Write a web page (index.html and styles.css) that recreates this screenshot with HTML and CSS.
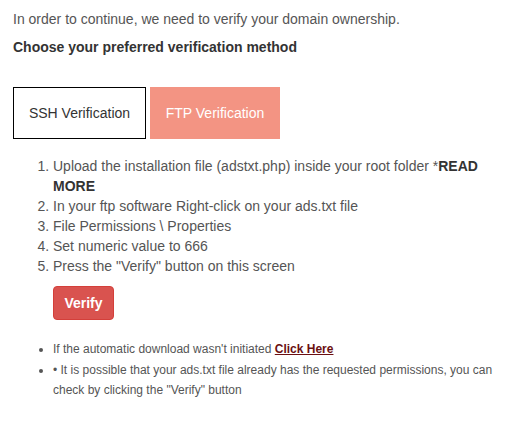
FILE: index.html
```html
<!DOCTYPE html>
<html lang="en">
<head>
    <meta charset="UTF-8">
    <meta name="viewport" content="width=device-width, initial-scale=1.0">
    <title>Verify Domain Ownership</title>

    <link rel="stylesheet" href="styles.css">
</head>
<body>
    <main class="wrapper">
        <p class="intro">In order to continue, we need to verify your domain ownership.</p>
        <h4 class="subtitle">Choose your preferred verification method</h4>

        <div class="tabs">
            <button class="tab">SSH Verification</button>
            <button class="tab tab-active">FTP Verification</button>
        </div>

        <ol class="steps">
            <li>Upload the installation file (adstxt.php) inside your root folder *<b>READ MORE</b></li>
            <li>In your ftp software Right-click on your ads.txt file</li>
            <li>File Permissions \ Properties</li>
            <li>Set numeric value to 666</li>
            <li>Press the "Verify" button on this screen</li>
        </ol>

        <div class="actions">
            <button class="btn-verify">Verify</button>
        </div>

        <ul class="notes">
            <li>If the automatic download wasn't initiated <a href="#">Click Here</a></li>
            <li>&bull; It is possible that your ads.txt file already has the requested permissions, you can check by clicking the "Verify" button</li>
        </ul>
    </main>
</body>
</html>
```

FILE: styles.css
```css
* {
    padding: 0;
    margin: 0;
    box-sizing: border-box;
}

body {
    background-color: #fff;
    color: #555;
    font-family: "Liberation Sans", Arial, sans-serif;
    font-size: 14px;
}

.wrapper {
    padding: 9px 13px 0 13px;
}

.intro {
    line-height: 20px;
}

.subtitle {
    margin-top: 10px;
    font-size: 14px;
    line-height: 17px;
    color: #333;
}

.tabs {
    display: flex;
    align-items: flex-start;
    gap: 4px;
    margin-top: 31px;
}

.tab {
    font-family: inherit;
    font-size: 14px;
    height: 52px;
    background-color: #fff;
    color: #333;
    border: 1px solid #000;
    cursor: pointer;
}

.tab:first-child {
    width: 133px;
}

.tab-active {
    width: 130px;
    background-color: #f39483;
    border-color: #f39483;
    color: #fff;
}

.steps {
    margin-top: 17px;
    padding-left: 40px;
    line-height: 20px;
}

.steps b {
    color: #333;
}

.actions {
    padding-left: 40px;
    margin-top: 10px;
}

.btn-verify {
    font-family: inherit;
    font-size: 14px;
    font-weight: bold;
    color: #fff;
    background-color: #d9534f;
    border: 1px solid #d43f3a;
    border-radius: 4px;
    width: 61px;
    height: 34px;
}

.notes {
    margin-top: 19px;
    padding-left: 40px;
    font-size: 12px;
    line-height: 20px;
}

.notes li {
    margin-bottom: 1px;
}

.notes a {
    color: #6b0f12;
    font-weight: bold;
}
```
